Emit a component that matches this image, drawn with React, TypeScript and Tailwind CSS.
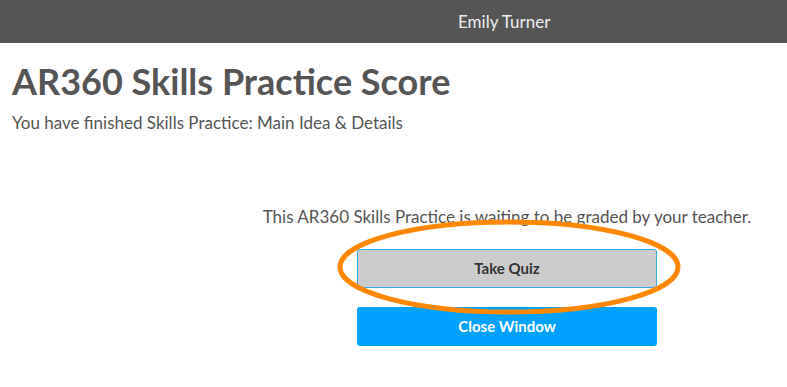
import React from 'react';

const App = () => {
  return (
    <div className="relative w-[787px] h-[387px] bg-white overflow-hidden" style={{ fontFamily: 'Lato, "Open Sans", sans-serif' }}>
      <div className="h-[43px] bg-[#555555] flex items-center">
        <span className="ml-[458px] text-[17px] text-[#eeeeee]">Emily Turner</span>
      </div>
      <div className="px-3">
        <h1 className="mt-[17px] text-[36px] leading-[42px] font-bold text-[#555555]">AR360 Skills Practice Score</h1>
        <p className="mt-[11px] text-[17px] leading-[20px] text-[#555555]">You have finished Skills Practice: Main Idea &amp; Details</p>
      </div>
      <div className="ml-[227px] mt-[74px] flex flex-col items-center">
        <p className="text-[17px] leading-[20px] text-[#555555]">This AR360 Skills Practice is waiting to be graded by your teacher.</p>
        <button className="mt-[22px] w-[300px] h-[39px] bg-[#cccccc] border border-[#33aaee] rounded-[3px] text-[15px] font-bold text-[#333333]">
          Take Quiz
        </button>
        <button className="mt-[19px] w-[300px] h-[39px] bg-[#00a2ff] rounded-[3px] text-[15px] font-bold text-white">
          Close Window
        </button>
      </div>
      <svg className="absolute left-0 top-0 pointer-events-none" width="787" height="387">
        <ellipse cx="509" cy="267" rx="169" ry="45" fill="none" stroke="#ff8800" strokeWidth="5" />
      </svg>
    </div>
  );
};

export default App;
